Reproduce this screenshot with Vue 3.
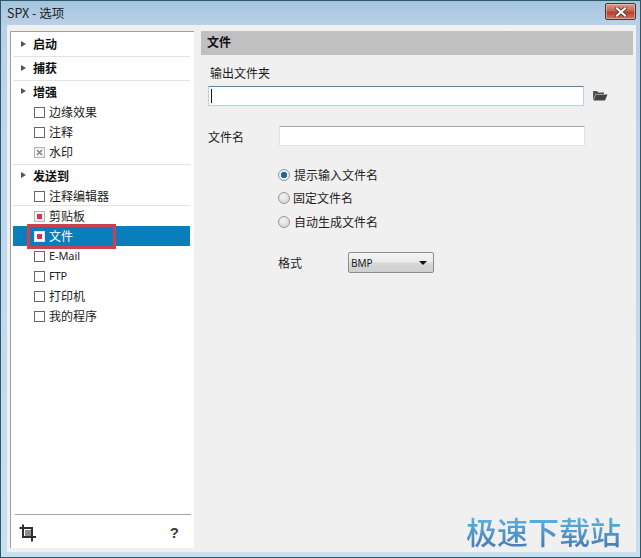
<script setup>
const groups = [
  { title: '启动', items: [] },
  { title: '捕获', items: [] },
  { title: '增强', items: [
    { label: '边缘效果' }, { label: '注释' }, { label: '水印', state: 'cross' },
  ] },
  { title: '发送到', items: [
    { label: '注释编辑器', rule: true },
    { label: '剪贴板', state: 'dot' },
    { label: '文件', state: 'dot', selected: true },
    { label: 'E-Mail' }, { label: 'FTP' }, { label: '打印机' }, { label: '我的程序' },
  ] },
]
const radios = [
  { label: '提示输入文件名', on: true, cls: 'r1' },
  { label: '固定文件名', on: false, cls: 'r2' },
  { label: '自动生成文件名', on: false, cls: 'r3' },
]
</script>

<template>
  <div class="window">
    <header class="titlebar">
      <span class="title">SPX - 选项</span>
      <button class="close" aria-label="关闭">
        <svg width="12" height="10" viewBox="0 0 12 10">
          <path d="M2 1.5 L10 8.5 M10 1.5 L2 8.5" stroke="#3d2a28" stroke-width="3.6" stroke-linecap="square" />
          <path d="M2 1.5 L10 8.5 M10 1.5 L2 8.5" stroke="#fff" stroke-width="2.2" stroke-linecap="square" />
        </svg>
      </button>
    </header>

    <div class="client">
      <aside class="sidebar">
        <nav class="tree">
          <section v-for="g in groups" :key="g.title" class="group">
            <h3 class="group-title"><i class="arrow"></i><span class="group-text">{{ g.title }}</span></h3>
            <div
              v-for="it in g.items"
              :key="it.label"
              class="item"
              :class="{ selected: it.selected, ruled: it.rule }"
            >
              <span class="box" :class="it.state">
                <svg v-if="it.state === 'cross'" width="7" height="7" viewBox="0 0 7 7">
                  <path d="M1 1 L6 6 M6 1 L1 6" stroke="#777" stroke-width="1.2" />
                </svg>
              </span>
              <span class="item-text" :class="{ latin: /^[A-Z]/.test(it.label) }">{{ it.label }}</span>
              <span v-if="it.selected" class="highlight"></span>
            </div>
          </section>
        </nav>
        <footer class="side-foot">
          <svg width="18" height="18" viewBox="0 0 18 18">
            <rect x="6" y="6" width="6" height="6" fill="#8f8f8f" />
            <path d="M4 0.5 V13 H17 M0.5 4 H13 V17.5" fill="none" stroke="#2e2e2e" stroke-width="2" />
          </svg>
          <span class="help">?</span>
        </footer>
      </aside>

      <main class="panel">
        <h2 class="panel-head"><span>文件</span></h2>
        <div class="form">
          <label class="folder-label">输出文件夹</label>
          <div class="folder-row">
            <div class="input focus"><i class="caret"></i></div>
            <svg class="folder" width="16" height="12" viewBox="0 0 16 12">
              <path d="M1 11 V2 H5 L6.5 3.5 H12 V5 H4 Z" fill="#555" />
              <path d="M1.5 11.5 L4 5.5 H15.5 L13 11.5 Z" fill="#444" />
            </svg>
          </div>
          <div class="name-row">
            <label class="name-label">文件名</label>
            <div class="input name"></div>
          </div>
          <div class="radios">
            <div v-for="r in radios" :key="r.label" class="radio-row" :class="r.cls">
              <span class="radio" :class="{ on: r.on }"></span>
              <span class="radio-text">{{ r.label }}</span>
            </div>
          </div>
          <div class="format-row">
            <label class="format-label">格式</label>
            <div class="select"><span>BMP</span><i class="select-arrow"></i></div>
          </div>
        </div>
      </main>
    </div>

    <div class="watermark">极速下载站</div>
  </div>
</template>

<style>
html, body { margin: 0; padding: 0; }
</style>

<style scoped>
* { box-sizing: border-box; }
.window {
  position: relative;
  width: 641px;
  height: 558px;
  display: flex;
  flex-direction: column;
  overflow: hidden;
  border: 1px solid #2b5a66;
  padding: 0 4px 5px 6px;
  background: linear-gradient(180deg, #a5c3df 0, #b9d1e8 24px, #bcd5ea 120px, #c6e0f0 100%);
  font-family: "Noto Sans CJK SC", "Noto Sans", sans-serif;
  font-size: 12px;
  color: #1c1c1c;
}
.titlebar {
  height: 24px;
  flex: none;
  display: flex;
  align-items: center;
  justify-content: space-between;
}
.title {
  font-size: 12.5px;
  color: #222;
  margin-top: -1px;
}
.close {
  width: 31px;
  height: 17px;
  margin: -3px 0 0 0;
  padding: 0;
  display: flex;
  align-items: center;
  justify-content: center;
  border: 1px solid #4a3438;
  border-radius: 2px;
  background: linear-gradient(180deg, #d99a8a 0, #c9664f 45%, #b8402c 55%, #d0735f 100%);
  box-shadow: inset 0 0 0 1px rgba(255, 255, 255, .35);
}
.client {
  flex: 1;
  min-height: 0;
  display: flex;
  gap: 7px;
  padding: 6px 3px 4px 3px;
  background: #f0f0f0;
}
.sidebar {
  width: 184px;
  flex: none;
  display: flex;
  flex-direction: column;
  justify-content: space-between;
  background: #fff;
  border-left: 1px solid #a0a0a0;
  border-top: 1px solid #a0a0a0;
}
.tree { padding: 1px 4px 0 2px; }
.group { border-bottom: 1px solid #e2e2e2; }
.group:last-child { border-bottom: none; }
.group:nth-child(3) { padding-bottom: 2px; }
.group-title {
  margin: 0;
  height: 23px;
  display: flex;
  align-items: center;
  gap: 7px;
  padding-left: 8px;
  font-size: 12px;
  font-weight: 700;
  color: #111;
}
.group-text { margin-top: -2px; }
.group:nth-child(3) .group-title,
.group:nth-child(4) .group-title { height: 21px; }
.group:nth-child(3) .group-text,
.group:nth-child(4) .group-text { margin-top: 0; }
.arrow {
  width: 0;
  height: 0;
  border-style: solid;
  border-width: 3.5px 0 3.5px 5px;
  border-color: transparent transparent transparent #555;
  margin-top: -1px;
}
.item {
  position: relative;
  height: 20px;
  display: flex;
  align-items: center;
  gap: 4px;
  padding-left: 21px;
  color: #222;
}
.item.ruled::after {
  content: "";
  position: absolute;
  left: 0;
  right: 0;
  bottom: 0;
  height: 1px;
  background: #e2e2e2;
}
.item.selected {
  background: #0a7ebd;
  color: #fff;
}
.box {
  width: 11px;
  height: 11px;
  flex: none;
  display: flex;
  align-items: center;
  justify-content: center;
  background: #fff;
  border: 1px solid #666;
}
.box.cross { border-color: #b4b4b4; background: #f4f4f4; }
.box.dot { border-color: #b4b4b4; background: #f6f6f6; }
.box.dot::before {
  content: "";
  width: 5px;
  height: 5px;
  background: #d8324e;
}
.selected .box.dot { background: #fff; border-color: #dfe6ea; }
.item-text { line-height: 20px; margin-top: -1px; }
.item-text.latin { font-family: "Noto Sans", sans-serif; font-size: 11px; letter-spacing: -.1px; }
.highlight {
  position: absolute;
  left: 14px;
  top: -2px;
  width: 89px;
  height: 25px;
  border: 3px solid #c8434f;
}
.side-foot {
  margin: 0 3px 0 4px;
  height: 34px;
  display: flex;
  align-items: center;
  justify-content: space-between;
  padding: 0 12px 0 4px;
  border-top: 1px solid #a6a6a6;
}
.side-foot svg { margin-top: 2px; }
.help {
  font-family: "Liberation Sans", sans-serif;
  font-size: 15px;
  font-weight: 700;
  color: #3a3a3a;
  margin-top: 2px;
}
.panel {
  flex: 1;
  min-width: 0;
  display: flex;
  flex-direction: column;
}
.panel-head {
  margin: 0;
  height: 24px;
  display: flex;
  align-items: center;
  padding-left: 6px;
  background: #c0c0c0;
  font-size: 12px;
  font-weight: 700;
  color: #111;
}
.panel-head span { margin-top: -3px; }
.form {
  display: flex;
  flex-direction: column;
  padding-left: 7px;
}
.folder-label {
  margin: 9px 0 0 2px;
  height: 17px;
  line-height: 17px;
}
.folder-row {
  margin-top: 5px;
  display: flex;
  align-items: center;
  gap: 8px;
}
.input {
  height: 20px;
  background: #fff;
  border: 1px solid #dfe3e6;
  border-top-color: #a8a8a8;
  border-radius: 1px;
  display: flex;
  align-items: center;
  padding-left: 2px;
}
.input.focus {
  width: 376px;
  border-color: #b4d2e0;
  border-top-color: #5d8196;
  box-shadow: 0 0 0 1px #e6f1f6;
}
.caret {
  width: 1px;
  height: 14px;
  background: #111;
}
.folder { margin-top: -2px; }
.name-row {
  margin-top: 20px;
  display: flex;
  align-items: center;
}
.name-label { width: 71px; }
.input.name { width: 306px; }
.radios {
  display: flex;
  flex-direction: column;
  padding-left: 70px;
  margin-top: 18px;
}
.radio-row {
  display: flex;
  align-items: center;
  gap: 4px;
  height: 22px;
}
.radio-text { margin-top: -2px; }
.radio-row.r2 { margin-top: 1px; }
.radio-row.r2 .radio-text { margin-left: -1px; }
.radio-row.r3 { margin-top: 2px; }
.radio {
  width: 12px;
  height: 12px;
  border-radius: 50%;
  flex: none;
  border: 1px solid #9a9a9a;
  background: radial-gradient(circle at 40% 35%, #f4f4f4 0, #cfcfcf 100%);
}
.radio.on {
  border-color: #8c9aa3;
  background: radial-gradient(circle, #17607f 0, #2c7396 42%, #e6edf1 50%, #f4f6f7 100%);
}
.format-row {
  margin-top: 19px;
  display: flex;
  align-items: center;
  padding-left: 70px;
}
.format-label { width: 70px; }
.select {
  width: 86px;
  height: 21px;
  display: flex;
  align-items: center;
  justify-content: space-between;
  padding: 0 6px 0 2px;
  border: 1px solid #8d8d8d;
  border-radius: 2px;
  background: linear-gradient(180deg, #f5f5f5 0, #eaeaea 48%, #d8d8d8 52%, #cfcfcf 100%);
  font-family: "Noto Sans", sans-serif;
  font-size: 10px;
}
.select-arrow {
  width: 0;
  height: 0;
  border-style: solid;
  border-width: 4px 4px 0 4px;
  border-color: #111 transparent transparent transparent;
}
.watermark {
  position: absolute;
  right: 19px;
  bottom: 6px;
  font-size: 31px;
  line-height: 40px;
  font-weight: 500;
  white-space: nowrap;
  background: linear-gradient(180deg, #5bb3e0 15%, #4a7fb8 85%);
  -webkit-background-clip: text;
  background-clip: text;
  color: transparent;
}
</style>
